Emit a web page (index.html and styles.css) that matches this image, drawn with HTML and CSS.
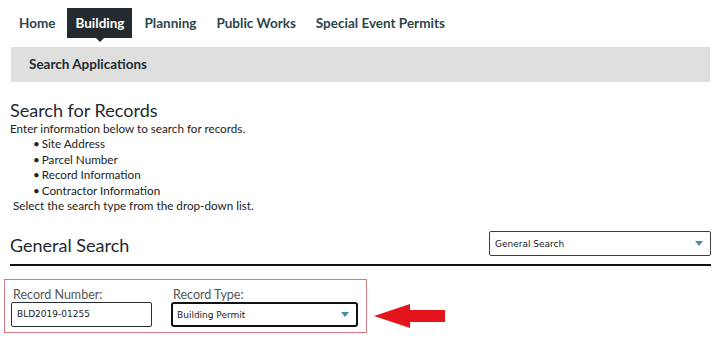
FILE: index.html
```html
<!DOCTYPE html>
<html>
<head>
<meta charset="utf-8">
<link rel="stylesheet" href="styles.css">
</head>
<body>
<nav class="tabs">
  <a class="tab">Home</a>
  <a class="tab active">Building</a>
  <a class="tab">Planning</a>
  <a class="tab">Public Works</a>
  <a class="tab">Special Event Permits</a>
</nav>
<div class="subbar">Search Applications</div>
<main class="content">
  <h1 class="title">Search for Records</h1>
  <p class="intro">Enter information below to search for records.</p>
  <ul class="list">
    <li>Site Address</li>
    <li>Parcel Number</li>
    <li>Record Information</li>
    <li>Contractor Information</li>
  </ul>
  <p class="note">Select the search type from the drop-down list.</p>
  <div class="gs-head">
    <h2 class="gs-title">General Search</h2>
    <div class="select wide"><span>General Search</span><i class="tri"></i></div>
  </div>
  <div class="form-row">
    <div class="fields">
      <div class="field">
        <label>Record Number:</label>
        <div class="input">BLD2019-01255</div>
      </div>
      <div class="field">
        <label>Record Type:</label>
        <div class="select type"><span>Building Permit</span><i class="tri"></i></div>
      </div>
    </div>
    <svg class="arrow" width="72" height="26" viewBox="0 0 72 26">
      <polygon points="0,13 36,1 36,7 71,7 71,19 36,19 36,25" fill="#e3161d"/>
    </svg>
  </div>
</main>
</body>
</html>
```

FILE: styles.css
```css
* { box-sizing: border-box; }
body {
  margin: 0;
  font-family: Lato, "Open Sans", sans-serif;
  color: #222;
  background: #fff;
  width: 725px;
  height: 342px;
  overflow: hidden;
}
.tabs {
  display: flex;
  padding: 8px 0 0 11px;
  height: 47px;
  align-items: flex-start;
}
.tab {
  font-weight: 700;
  font-size: 13.5px;
  color: #2c4548;
  height: 30px;
  line-height: 30px;
  padding: 0 8px;
  margin-right: 4px;
  position: relative;
}
.tab.active {
  background: #232b31;
  color: #fff;
}
.tab.active::after {
  content: "";
  position: absolute;
  left: 50%;
  bottom: -4px;
  margin-left: -4px;
  border-left: 4px solid transparent;
  border-right: 4px solid transparent;
  border-top: 4px solid #232b31;
}
.subbar {
  margin: 0 15px 0 11px;
  height: 35px;
  background: #dfe0de;
  font-weight: 700;
  font-size: 13.5px;
  color: #232b31;
  line-height: 35px;
  padding-left: 18px;
}
.content {
  padding: 0 14px 0 10px;
}
.title {
  margin: 17px 0 0;
  font-size: 18px;
  font-weight: 400;
  color: #1f2a30;
  line-height: 22px;
}
.intro, .note {
  margin: 0;
  font-size: 11.7px;
  line-height: 15.4px;
  color: #222;
}
.note { padding-left: 3px; }
.list {
  margin: 0;
  padding: 0 0 0 23px;
  list-style: none;
  font-size: 11.7px;
  line-height: 15.4px;
}
.list li::before {
  content: "•";
  margin-right: 2px;
}
.gs-head {
  display: flex;
  justify-content: space-between;
  align-items: center;
  margin-top: 18px;
  height: 35px;
  border-bottom: 2px solid #111;
  padding-bottom: 8px;
}
.gs-title {
  margin: 3px 0 0;
  font-size: 18px;
  font-weight: 400;
  color: #1f2a30;
}
.select {
  display: flex;
  align-items: center;
  justify-content: space-between;
  border: 1px solid #3a3f44;
  border-radius: 2px;
  background: #fff;
  font-family: "DejaVu Sans", Verdana, sans-serif;
  font-size: 9px;
  color: #222;
  padding: 0 7px 0 5px;
}
.select.wide {
  width: 222px;
  height: 25px;
}
.tri {
  width: 0;
  height: 0;
  border-left: 4px solid transparent;
  border-right: 4px solid transparent;
  border-top: 5px solid #4a8fa5;
}
.form-row {
  display: flex;
  align-items: flex-start;
  margin-left: -6px;
  margin-top: 13px;
}
.fields {
  display: flex;
  gap: 19px;
  border: 1px solid #d87a82;
  padding: 7px 8px 5px 6px;
  width: 363px;
}
.field label {
  display: block;
  font-size: 12.5px;
  color: #555;
  line-height: 15px;
  padding-left: 2px;
}
.input {
  width: 141px;
  height: 25px;
  border: 1px solid #2a2e33;
  border-radius: 2px;
  font-family: "DejaVu Sans", Verdana, sans-serif;
  font-size: 9px;
  line-height: 23px;
  padding-left: 5px;
  color: #222;
}
.select.type {
  width: 187px;
  height: 25px;
  border: 2px solid #111;
  border-radius: 3px;
  padding-left: 4px;
}
.arrow {
  margin: 24px 0 0 7px;
}
```
